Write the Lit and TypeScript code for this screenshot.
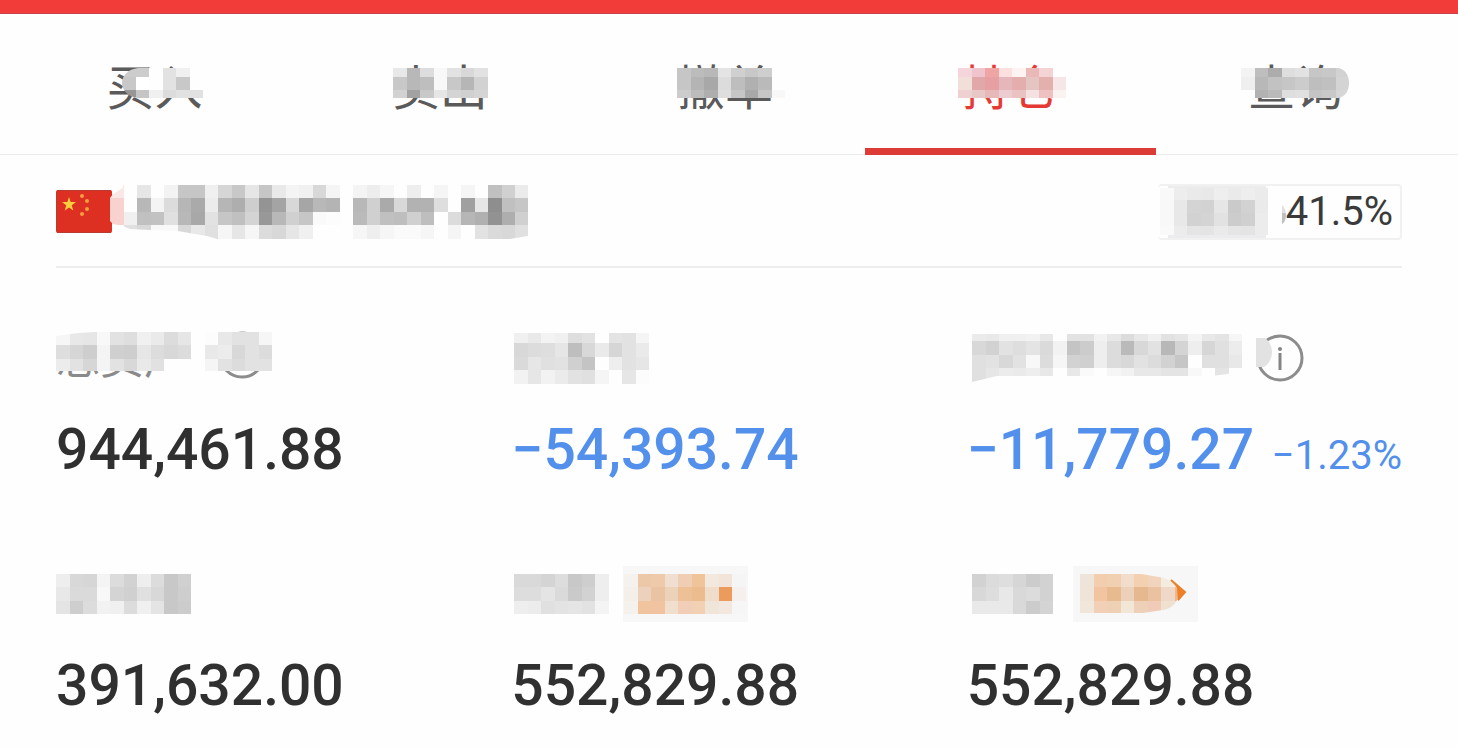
import { LitElement, html, svg, css, nothing } from "lit";
import { customElement, state } from "lit/decorators.js";

interface Mosaic {
  id: string;
  width: number;
  x: number;
  heights: number[];
  rows: string[];
  clip?: string;
}

const CELL = 13.5;
const TAB_ROWS = [9, 13, 8];

const mosaics: Record<string, Mosaic> = {
  buy: {
    id: "buy", width: 122, x: 28, heights: TAB_ROWS,
    rows: ["cc cc fe e2 f0 --", "c8 ff fe e2 c8 --", "96 c5 f0 dc e1 e1"],
    clip: "M44 0H109V30H44C34 29 28 22 28 15C28 8 34 1 44 0Z",
  },
  sell: {
    id: "sell", width: 122, x: 14, heights: TAB_ROWS,
    rows: ["e8 b8 dd f8 e2 d8 e2", "c8 b8 be f8 c8 b6 d2", "d2 a2 c8 e6 d4 d0 d4"],
  },
  cancel: {
    id: "cancel", width: 122, x: 13, heights: TAB_ROWS,
    rows: ["c6 bc b8 e4 d0 c8 ce --", "c6 b4 a8 dc be b0 ba --", "cc bc ae de c6 a8 c6 f8"],
  },
  hold: {
    id: "hold", width: 122, x: 9, heights: TAB_ROWS,
    rows: [
      "f5d5dc efc4cd f0a5a5 fce0e0 fdf3f2 ebb8b8 f3d3d3 --",
      "f2dfda e0a8a8 e6a0a3 e5b6ba e3aead e5c5c2 e4b0ae f7e6e8",
      "efd0d0 e8c8c6 e6b8b8 ecccd0 ebc2c2 f5e0e2 efc0c0 fbf2f2",
    ],
  },
  query: {
    id: "query", width: 122, x: 7, heights: TAB_ROWS,
    rows: ["f3 be ac de e2 c6 c8 d2", "ef b8 c2 c6 cc be c0 d4", "-- b2 ba de e0 c4 c8 d6"],
    clip: "M7 0H105C112 2 115 8 115 15C115 22 112 28 105 30H7Z",
  },
  account: {
    id: "account", width: 418, x: 0, heights: [13, 14, 13, 14],
    rows: [
      "fae8e6 -- e6 fe f3 c6 c6 f0 d6 c8 e6 c6 e9 f4 f1 d8 f5 -- f4 ed f6 fe ee fe f5 fe f5 fe c0 d0 eb",
      "f8d2ce -- b8 f4 dc b6 aa ec b6 ae ce 94 a4 d8 a6 b8 b4 -- b8 d0 aa d8 b2 b2 de fe a0 e6 8e c0 c6",
      "f8d2ce f0 c0 c2 e0 b8 a8 e2 c6 c0 d4 98 b8 d0 c6 fa fc -- ba d0 c0 be d0 be fe dc b6 b0 92 ae d0",
      "-- e0 d8 f8 f8 d8 e8 e0 f6 e6 f6 dc d8 e6 f0 -- -- -- f6 ee f6 fa fa f6 -- f5 -- e2 da d8 e0",
    ],
    clip: "M0 13L3 9L13 3V0H418V51L400 54H107L97 51L85 49L68 46L40 45L20 44L13 41L3 39L0 36Z",
  },
  ratio: {
    id: "ratio", width: 128, x: 2, heights: [12, 13, 13, 9],
    rows: ["f9 ed ea e8 ee ea ee eb", "f8 e8 d4 d2 e6 ca d2 ea -- e0", "f8 e8 d2 d4 e2 cc d0 ec -- c0", "f9 ec e5 e4 ea e5 e4 ec"],
    clip: "M0 0H110V14H121C126 18 128 22 128 27C128 32 126 36 121 38H110V47H0Z",
  },
  assets: {
    id: "assets", width: 216, x: 0, heights: [13, 14, 12],
    rows: [
      "f6 e8 e6 f8 e2 de f0 ea dc e6 -- fc e8 e2 e2 f6",
      "de d6 ce f4 d0 ce e6 dc d8 dc -- e9 ec d8 e2 dc",
      "ec e2 d6 f4 e2 d8 e9 e1 fe fe -- f5 e2 dc e2 e2",
    ],
    clip: "M0 4L22 1L40 0H216V39H0Z",
  },
  profit: {
    id: "profit", width: 138, x: 3, heights: [10, 14, 13, 14],
    rows: [
      "f0 e9 f3 f0 de e2 -- e4 e2 f5",
      "d8 dc de e6 be d8 ea d6 e2 ea",
      "da e6 e0 e2 d0 c4 fe ee e2 e6",
      "f2 e6 f2 eb e2 e0 f5 fe e6 fc",
    ],
  },
  today: {
    id: "today", width: 275, x: 5, heights: [7, 14, 13, 14],
    rows: [
      "eb e9 f0 f0 f2 e8 -- e2 e2 f2 e8 dc e8 f0 e2 e6 f4 e8 e4 f6",
      "d8 d2 e2 de e4 da f2 c4 cc ee dc ba d8 e2 b8 d4 ee d6 e0 ec",
      "e0 e2 d8 e2 f8 dc f6 d2 d0 ee dc d8 e2 dc d2 c6 fe e0 e0 e8",
      "e0 e6 ec ea ee e8 -- e8 fa fe f6 f2 e8 e8 e4 e4 f8 fe e4 --",
    ],
    clip: "M5 0H275V37L260 40L245 42H30L5 48Z",
  },
  market: {
    id: "market", width: 136, x: 0, heights: [13, 14, 13],
    rows: ["ee d8 d6 f4 dc d2 ee dc c8 d0", "e8 da da f8 d4 d0 e0 d8 c8 ce", "e4 ce dc f2 f0 dc f0 e4 c8 cc"],
  },
  usable: {
    id: "usable", width: 98, x: 3, heights: [13, 14, 13],
    rows: ["d9 d9 d4 dd c8 ce ee", "dd dd e4 da ca d2 ee", "ee ec e0 e3 e5 e2 f4"],
  },
  takeout: {
    id: "takeout", width: 92, x: 5, heights: [13, 14, 13],
    rows: ["d2 db de d6 cc d2", "d8 dd e8 d9 dc d2", "e9 e9 e9 d9 cc d4"],
  },
  chipA: {
    id: "chipA", width: 125, x: 1, heights: [13, 14, 13],
    rows: [
      "f5f2ee ecc8a8 eecaaa f0dfd0 f0ceb6 efc498 f2e8de f2e4d8 f5",
      "f4efe9 ecd2bc eac3a3 ebd2b8 eec096 ecbc8e f0dccb eb9b5c f5f0ee",
      "f5f2ee f1c4a0 f2c3a0 f0dfcd f2ceb8 f2d0b4 efe5d8 f2e8e0 f6",
    ],
  },
  chipB: {
    id: "chipB", width: 125, x: 7, heights: [13, 14, 13],
    rows: [
      "efe4da f2ceae f0d0b0 f2dccb f2d0b0 f2d4bc f5ece0 f5ece0",
      "f0e4d8 f2c4a0 e8ba90 ecd0ba e6b890 ebc2a0 efd8c8 efb78c",
      "f0e6da f2d0b8 eed0b4 f2e6d6 eed0b8 f0ccb8 f0e0d0 f0e0d0",
    ],
    clip: "M7 0H68L86 3C96 4 103 10 106 18C106 27 99 35 90 36L70 39H7Z",
  },
};

function drawMosaic(m: Mosaic, extra: unknown = nothing) {
  const total = m.heights.reduce((a, b) => a + b, 0);
  let top = 0;
  const cells: unknown[] = [];
  m.rows.forEach((row, r) => {
    const h = m.heights[r];
    row.split(" ").forEach((c, i) => {
      if (c === "--") return;
      const left = Math.round(i * CELL);
      const w = Math.round((i + 1) * CELL) - left;
      const fill = c.length === 2 ? `#${c}${c}${c}` : `#${c}`;
      cells.push(svg`<rect x=${m.x + left} y=${top} width=${w} height=${h} fill=${fill}></rect>`);
    });
    top += h;
  });
  return html`<svg class="mosaic" aria-hidden="true" width=${m.width} height=${total} viewBox="0 0 ${m.width} ${total}">
    ${m.clip ? svg`<clipPath id=${m.id}><path d=${m.clip}></path></clipPath>` : nothing}
    <g shape-rendering="crispEdges" clip-path=${m.clip ? `url(#${m.id})` : nothing}>${cells}</g>
    ${extra}
  </svg>`;
}

const tabs = [
  { key: "buy", text: "买入" },
  { key: "sell", text: "卖出" },
  { key: "cancel", text: "撤单" },
  { key: "hold", text: "持仓" },
  { key: "query", text: "查询" },
];

const flag = html`<svg class="flag" aria-hidden="true" width="56" height="43" viewBox="0 0 56 43">
  <rect width="56" height="43" rx="2" fill="#de3022"></rect>
  <path d="M0.5 2V41M1 42.5H55M1 .5H55" stroke="#b83a30" fill="none"></path>
  <path fill="#fbd03c" d="M13 7L14.6 12L20 12.1L15.7 15.3L17.3 20.4L13 17.4L8.7 20.4L10.3 15.3L6 12.1L11.4 12Z"></path>
  <g fill="#f3a03a">
    <circle cx="26" cy="6" r="2"></circle>
    <circle cx="31" cy="11" r="2"></circle>
    <circle cx="31" cy="19" r="2"></circle>
    <circle cx="26" cy="24" r="2"></circle>
  </g>
</svg>`;

const infoIcon = html`<svg aria-hidden="true" width="48" height="48" viewBox="0 0 48 48">
  <circle cx="24" cy="24" r="22" fill="none" stroke="#8c8c8c" stroke-width="3"></circle>
  <circle cx="24" cy="15" r="2" fill="#858585"></circle>
  <path d="M24 19V36" stroke="#858585" stroke-width="3"></path>
</svg>`;

const infoSmudge = html`<svg class="smudge" aria-hidden="true" width="16" height="29" viewBox="0 0 16 29">
  <path d="M0 0H9C14 4 16 9 16 14C16 20 13 26 8 29H0Z" fill="#e2e2e2"></path>
</svg>`;

const arrow = svg`<path d="M98 6L112 18L105 27L104 14Z" fill="#f08024"></path><path d="M98 6L112 18L105 26" fill="none" stroke="#e8812f" stroke-width="2"></path>`;

@customElement("app-root")
export class AppRoot extends LitElement {
  @state() private active = "hold";

  static styles = css`
    :host {
      display: block;
      background: #fefefe;
      color: #303030;
      font-family: Roboto, "Noto Sans CJK SC", sans-serif;
    }
    button {
      margin: 0;
      padding: 0;
      border: 0;
      background: none;
      font: inherit;
      color: inherit;
      cursor: pointer;
    }
    svg {
      display: block;
      flex: none;
    }
    .topbar {
      box-sizing: border-box;
      height: 14px;
      background: #f23c3a;
      border-bottom: 1px solid #c8434c;
    }
    .tabs {
      display: flex;
      padding: 0 20px 0 12px;
      border-bottom: 1px solid #ebebeb;
    }
    .tab {
      position: relative;
      flex: 1;
      display: flex;
      justify-content: center;
      padding: 42px 0;
      font-family: "Noto Sans CJK SC", sans-serif;
      font-size: 48px;
      line-height: 56px;
      color: #5a5a5a;
    }
    .tab.active {
      color: #e53935;
    }
    .tab.active::after {
      content: "";
      position: absolute;
      left: -3px;
      right: -3px;
      bottom: -1px;
      height: 7px;
      background: #dd3c36;
    }
    .word {
      position: relative;
      white-space: nowrap;
    }
    .word .mosaic {
      position: absolute;
      left: -13px;
      top: 12px;
    }
    main {
      padding: 0 56px;
    }
    .account {
      box-sizing: border-box;
      display: flex;
      align-items: center;
      justify-content: space-between;
      height: 113px;
      padding-top: 2px;
      border-bottom: 2px solid #ededee;
    }
    .holder {
      display: flex;
      align-items: center;
    }
    .holder .mosaic {
      margin-left: -2px;
    }
    .ratio {
      box-sizing: border-box;
      display: flex;
      align-items: center;
      height: 56px;
      padding-right: 7px;
      border: 2px solid #f1f1f1;
      border-left: 0;
      border-radius: 4px;
      background: linear-gradient(90deg, #fefefe 10px, #ececee 10px, #ececee 108px, #fefefe 108px);
      font-size: 40px;
      line-height: 52px;
      color: #3a3a3a;
    }
    .stats {
      display: grid;
      grid-template-columns: repeat(3, minmax(0, 1fr));
      gap: 86px 20px;
      margin: 0;
      padding: 62px 0 32px;
    }
    .label {
      position: relative;
      box-sizing: border-box;
      display: flex;
      align-items: center;
      height: 56px;
      font-family: "Noto Sans CJK SC", sans-serif;
      font-size: 44px;
      line-height: 56px;
      color: #8a8a8a;
      white-space: nowrap;
    }
    .label.covered {
      gap: 30px;
      padding-bottom: 6px;
    }
    .label.covered .mosaic {
      position: absolute;
      left: 0;
      top: 2px;
    }
    .label.spaced {
      gap: 14px;
    }
    .info {
      position: relative;
    }
    .smudge {
      position: absolute;
      left: 0;
      top: 4px;
    }
    .chip {
      display: flex;
      align-items: center;
      height: 56px;
      background: #f7f7f7;
    }
    .value {
      display: flex;
      align-items: baseline;
      justify-content: space-between;
      margin: 34px 0 0;
      font-size: 57px;
      font-weight: 500;
      line-height: 60px;
      white-space: nowrap;
    }
    .down {
      color: #5390ec;
    }
    .percent {
      font-size: 40px;
      font-weight: 400;
      line-height: 40px;
    }
  `;

  render() {
    return html`
      <div class="topbar"></div>
      <nav class="tabs">
        ${tabs.map(
          (t) => html`<button
            class="tab ${this.active === t.key ? "active" : ""}"
            @click=${() => (this.active = t.key)}
          ><span class="word">${t.text}${drawMosaic(mosaics[t.key])}</span></button>`
        )}
      </nav>
      <main>
        <section class="account">
          <div class="holder">${flag}${drawMosaic(mosaics.account)}</div>
          <div class="ratio">${drawMosaic(mosaics.ratio)}<span>41.5%</span></div>
        </section>
        <dl class="stats">
          <div>
            <dt class="label covered"><span>总资产</span>${infoIcon}${drawMosaic(mosaics.assets)}</dt>
            <dd class="value">944,461.88</dd>
          </div>
          <div>
            <dt class="label">${drawMosaic(mosaics.profit)}</dt>
            <dd class="value down">−54,393.74</dd>
          </div>
          <div>
            <dt class="label spaced">
              ${drawMosaic(mosaics.today)}
              <button class="info">${infoIcon}${infoSmudge}</button>
            </dt>
            <dd class="value down"><span>−11,779.27</span><span class="percent">−1.23%</span></dd>
          </div>
          <div>
            <dt class="label">${drawMosaic(mosaics.market)}</dt>
            <dd class="value">391,632.00</dd>
          </div>
          <div>
            <dt class="label spaced">
              ${drawMosaic(mosaics.usable)}
              <button class="chip">${drawMosaic(mosaics.chipA)}</button>
            </dt>
            <dd class="value">552,829.88</dd>
          </div>
          <div>
            <dt class="label spaced">
              ${drawMosaic(mosaics.takeout)}
              <button class="chip">${drawMosaic(mosaics.chipB, arrow)}</button>
            </dt>
            <dd class="value">552,829.88</dd>
          </div>
        </dl>
      </main>
    `;
  }
}
